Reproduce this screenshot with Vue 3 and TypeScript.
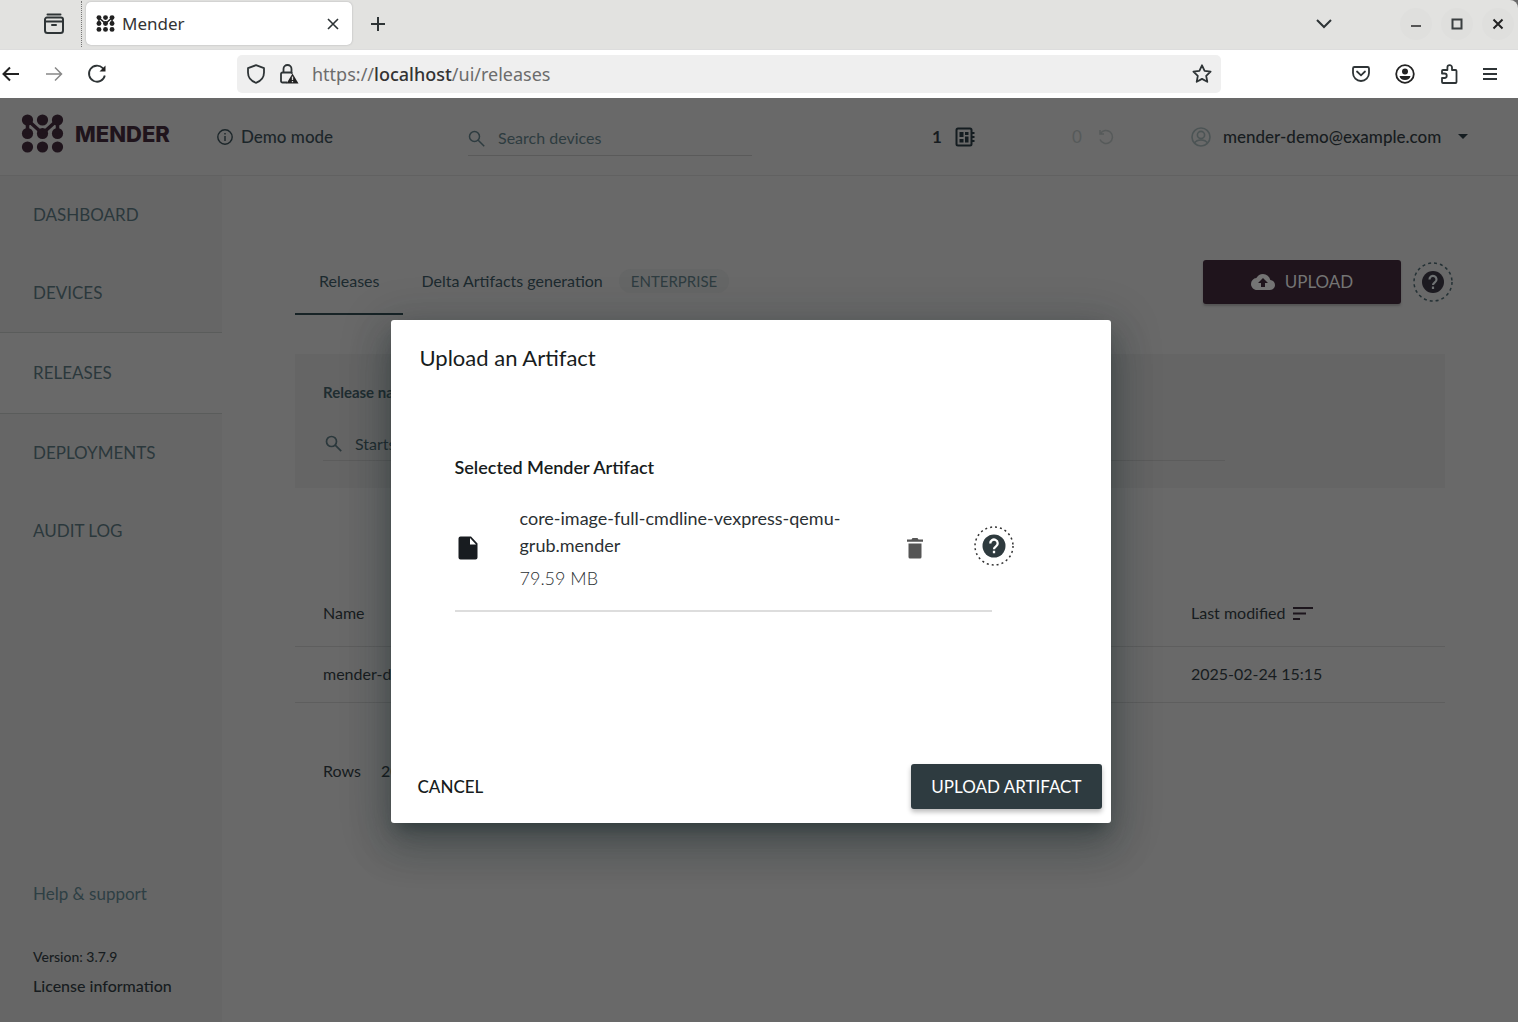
<script setup lang="ts">
import { ref } from 'vue'

interface NavItem {
  label: string
  active?: boolean
}

const navItems: NavItem[] = [
  { label: 'Dashboard' },
  { label: 'Devices' },
  { label: 'Releases', active: true },
  { label: 'Deployments' },
  { label: 'Audit log' },
]

const releases = [{ name: 'mender-demo-artifact', modified: '2025-02-24 15:15' }]

const file = { name: 'core-image-full-cmdline-vexpress-qemu-grub.mender', size: '79.59 MB' }

// Centres of the nine dots in the logo mark
const markDots = [6, 19.5, 33].flatMap((y) => [6.5, 21.5, 36.5].map((x) => ({ x, y })))

const deviceQuery = ref('')
const releaseQuery = ref('')
const rowsPerPage = ref(20)
</script>

<template>
  <div class="window">
    <div class="tabstrip">
      <button class="icon-btn history" aria-label="Recent browsing">
        <svg width="22" height="22" viewBox="0 0 22 22" fill="none" stroke="#2e3436" stroke-width="2">
          <path d="M4.500 1.500h13" stroke-linecap="round" />
          <path d="M2 9.500V6.500a2 2 0 0 1 2-2h14a2 2 0 0 1 2 2v11a2.500 2.500 0 0 1-2.500 2.500h-13A2.500 2.500 0 0 1 2 17.500V8.500h18" />
          <path d="M9 12h4" stroke-linecap="round" />
        </svg>
      </button>
      <div class="tab">
        <svg width="19" height="17" viewBox="0 0 43 39" fill="#222">
          <circle v-for="dot in markDots" :key="`${dot.x}-${dot.y}`" :cx="dot.x" :cy="dot.y" r="5.600" />
          <path d="M6.500 19.500V6l15 13.500L36.500 6v13.500" fill="none" stroke="#222" stroke-width="3.500" />
        </svg>
        <span class="tab-title">Mender</span>
        <button class="icon-btn" aria-label="Close tab">
          <svg width="12" height="12" viewBox="0 0 12 12" stroke="#2e3436" stroke-width="1.600"><path d="M1 1l10 10M11 1L1 11" /></svg>
        </button>
      </div>
      <button class="icon-btn new-tab" aria-label="New tab">
        <svg width="16" height="16" viewBox="0 0 16 16" stroke="#2e3436" stroke-width="2"><path d="M8 1v14M1 8h14" /></svg>
      </button>
      <div class="window-controls">
        <button class="icon-btn list-tabs" aria-label="List all tabs">
          <svg width="16" height="10" viewBox="0 0 16 10" fill="none" stroke="#2e3436" stroke-width="2"><path d="M1 1l7 7 7-7" /></svg>
        </button>
        <button class="icon-btn round" aria-label="Minimize">
          <svg width="12" height="12" viewBox="0 0 12 12" stroke="#555" stroke-width="2"><path d="M1 8h10" /></svg>
        </button>
        <button class="icon-btn round" aria-label="Maximize">
          <svg width="12" height="12" viewBox="0 0 12 12" fill="none" stroke="#3a3f40" stroke-width="2"><path d="M1.500 1.500h9v9h-9z" /></svg>
        </button>
        <button class="icon-btn round" aria-label="Close">
          <svg width="12" height="12" viewBox="0 0 12 12" stroke="#222" stroke-width="2"><path d="M1.500 1.500l9 9M10.500 1.500l-9 9" /></svg>
        </button>
      </div>
    </div>

    <div class="toolbar">
      <button class="icon-btn nav-btn" aria-label="Back">
        <svg width="18" height="16" viewBox="0 0 18 16" fill="none" stroke="#222" stroke-width="2"><path d="M17 8H1.500M8 1.500L1.500 8 8 14.500" /></svg>
      </button>
      <button class="icon-btn nav-btn" aria-label="Forward">
        <svg width="18" height="16" viewBox="0 0 18 16" fill="none" stroke="#888" stroke-width="1.500"><path d="M1 8h15M10 1.500L16.500 8 10 14.500" /></svg>
      </button>
      <button class="icon-btn nav-btn" aria-label="Reload">
        <svg width="20" height="20" viewBox="0 0 20 20" fill="none" stroke="#2e3436" stroke-width="1.800"><path d="M17.800 11.500a8 8 0 1 1-2-7.300l1.500 1.500" /><path d="M18.500 1.500v6h-6z" fill="#222" stroke="none" /></svg>
      </button>
      <div class="urlbar">
        <svg width="20" height="20" viewBox="0 0 20 20" fill="none" stroke="#2e3436" stroke-width="1.800" stroke-linejoin="round"><path d="M10 1.200l8 3v4.300c0 5-3.200 8.600-8 10.300-4.800-1.700-8-5.300-8-10.300V4.200z" /></svg>
        <svg class="lock" width="20" height="20" viewBox="0 0 20 20" fill="none" stroke="#2e3436" stroke-width="1.800"><path d="M4.500 8.500V5a4 4 0 0 1 8 0v3.500M8 18.500H3.500A1.500 1.500 0 0 1 2 17v-7a1.500 1.500 0 0 1 1.500-1.500H12l1.500 1" /><path d="M13.500 9.500l6 10h-12z" fill="#222" stroke="none" /><path d="M13.500 12.500v3.500M13.500 17v1.200" stroke="#ddd" stroke-width="1.300" /></svg>
        <span class="url">https://<b>localhost</b>/ui/releases</span>
        <button class="icon-btn" aria-label="Bookmark this page">
          <svg width="20" height="20" viewBox="0 0 20 20" fill="none" stroke="#2e3436" stroke-width="1.800" stroke-linejoin="round"><path d="M10 1.300l2.600 5.500 6 .8-4.400 4.200 1.100 6-5.300-2.900-5.300 2.900 1.100-6L1.400 7.600l6-.8z" /></svg>
        </button>
      </div>
      <div class="toolbar-actions">
        <button class="icon-btn" aria-label="Pocket">
          <svg width="18" height="18" viewBox="0 0 18 18" fill="none" stroke="#2e3436" stroke-width="1.800"><path d="M2.500 2h13A1.500 1.500 0 0 1 17 3.500V8A8 8 0 0 1 1 8V3.500A1.500 1.500 0 0 1 2.500 2z" /><path d="M5 6.500l4 3.800 4-3.800" stroke-linecap="round" /></svg>
        </button>
        <button class="icon-btn" aria-label="Account">
          <svg width="20" height="20" viewBox="0 0 20 20"><circle cx="10" cy="10" r="8.800" fill="none" stroke="#222" stroke-width="1.800" /><circle cx="10" cy="7.500" r="3" fill="#222" /><path d="M4.500 12h11c-.5 2.500-2.500 4-5.500 4s-5-1.500-5.500-4z" fill="#222" /></svg>
        </button>
        <button class="icon-btn" aria-label="Extensions">
          <svg width="18" height="20" viewBox="0 0 18 20" fill="none" stroke="#2e3436" stroke-width="1.800" stroke-linejoin="round"><path d="M3 19h12.500a1 1 0 0 0 1-1V7a1 1 0 0 0-1-1H12V3.500a2.300 2.300 0 0 0-4.600 0V6H3a1 1 0 0 0-1 1v2.500h2.500a2.200 2.200 0 0 1 0 4.500H2v4a1 1 0 0 0 1 1z" /></svg>
        </button>
        <button class="icon-btn" aria-label="Menu">
          <svg width="14" height="14" viewBox="0 0 14 14" stroke="#2e3436" stroke-width="2"><path d="M0 2h14M0 7h14M0 12h14" /></svg>
        </button>
      </div>
    </div>

    <div class="page">
      <header class="header">
        <a class="brand" href="#">
          <svg width="43" height="39" viewBox="0 0 43 39" fill="#1f141c">
            <circle v-for="dot in markDots" :key="`${dot.x}-${dot.y}`" :cx="dot.x" :cy="dot.y" r="5.600" />
            <path d="M6.500 19.500V6l15 13.500L36.500 6v13.500" fill="none" stroke="#1f141c" stroke-width="3.500" />
          </svg>
          <span class="wordmark">MENDER</span>
        </a>
        <div class="demo">
          <svg width="16" height="16" viewBox="0 0 16 16" fill="none" stroke="#1c262a" stroke-width="1.400"><circle cx="8" cy="8" r="7.200" /><path d="M8 7v5M8 4v1.600" /></svg>
          <span>Demo mode</span>
        </div>
        <label class="search">
          <svg width="17" height="17" viewBox="0 0 17 17" fill="none" stroke="#2e3c40" stroke-width="1.500"><circle cx="6.500" cy="6.500" r="5" /><path d="M10.200 10.200l6 6" /></svg>
          <input v-model="deviceQuery" type="text" placeholder="Search devices" aria-label="Search devices" />
        </label>
        <div class="counter">
          <b>1</b>
          <svg width="20" height="20" viewBox="0 0 20 20" fill="none" stroke="#141c20" stroke-width="2"><rect x="1.500" y="1.500" width="15" height="17" rx="1.500" /><path d="M16.500 6h3M16.500 10h3M16.500 14h3" /><path d="M4.500 5h4v5h-4zM10 5h3.500v3H10zM4.500 12h4v3.500h-4zM10 9.500h3.500v6H10z" fill="#141c20" stroke="none" /></svg>
        </div>
        <div class="counter muted">
          <span>0</span>
          <svg width="16" height="16" viewBox="0 0 16 16" fill="none" stroke="#565a5a" stroke-width="1.500"><path d="M2.500 4.500a6.500 6.500 0 1 1-.5 6M2 1v4h4" /></svg>
        </div>
        <button class="account">
          <svg width="20" height="20" viewBox="0 0 20 20" fill="none" stroke="#4c5455" stroke-width="1.600"><circle cx="10" cy="10" r="9" /><circle cx="10" cy="8" r="3.600" /><path d="M3.500 16c2.500-4 10.500-4 13 0" /></svg>
          <span>mender-demo@example.com</span>
          <svg class="caret" width="10" height="5" viewBox="0 0 10 5" fill="#141c20"><path d="M0 0h10L5 5z" /></svg>
        </button>
      </header>

      <div class="body">
        <nav class="sidebar">
          <a v-for="item in navItems" :key="item.label" href="#" class="nav-link" :class="{ active: item.active }">{{ item.label }}</a>
          <div class="sidebar-foot">
            <a href="#" class="help-link">Help &amp; support</a>
            <span class="version">Version: 3.7.9</span>
            <a href="#" class="license">License information</a>
          </div>
        </nav>

        <main class="main">
          <div class="tabs-row">
            <div class="tabs">
              <button class="tab-btn selected">Releases</button>
              <button class="tab-btn">Delta Artifacts generation <span class="chip">ENTERPRISE</span></button>
            </div>
            <button class="upload">
              <svg width="24" height="16" viewBox="0 0 24 16" fill="#747474"><path d="M19.350 6.040A7.490 7.490 0 0 0 12 0C9.110 0 6.600 1.640 5.350 4.040A5.994 5.994 0 0 0 0 10c0 3.310 2.690 6 6 6h13c2.760 0 5-2.240 5-5 0-2.640-2.050-4.780-4.650-4.960zM14 9v4h-4V9H7l5-5 5 5z" /></svg>
              <span>UPLOAD</span>
            </button>
            <button class="help-ring" aria-label="Help">
              <svg width="40" height="40" viewBox="0 0 40 40"><circle cx="20" cy="20" r="19" fill="none" stroke="#243135" stroke-width="1.500" stroke-dasharray="3 3" /><circle cx="20" cy="20" r="11" fill="#1c1a20" /><path d="M16.500 17.500a3.500 3.500 0 1 1 5.500 2.700c-1.200.9-2 1.400-2 2.800M20 24.500v2.500" fill="none" stroke="#6f7273" stroke-width="2.200" /></svg>
            </button>
          </div>

          <section class="filter">
            <label for="release-name">Release name</label>
            <div class="filter-input">
              <svg width="17" height="17" viewBox="0 0 17 17" fill="none" stroke="#2b383c" stroke-width="1.700"><circle cx="6.500" cy="6.500" r="5" /><path d="M10.200 10.200l6 6" /></svg>
              <input id="release-name" v-model="releaseQuery" type="text" placeholder="Starts with" />
            </div>
          </section>

          <table class="releases">
            <thead>
              <tr>
                <th>Name</th>
                <th>
                  <span class="sort">Last modified
                    <svg width="22" height="14" viewBox="0 0 22 14" stroke="#1c151c" stroke-width="2"><path d="M1 2h20M1 7.500h13M1 13h7" /></svg>
                  </span>
                </th>
              </tr>
            </thead>
            <tbody>
              <tr v-for="release in releases" :key="release.name">
                <td>{{ release.name }}</td>
                <td>{{ release.modified }}</td>
              </tr>
            </tbody>
          </table>

          <div class="pager">
            <label for="rows">Rows</label>
            <select id="rows" v-model="rowsPerPage">
              <option :value="10">10</option>
              <option :value="20">20</option>
              <option :value="50">50</option>
            </select>
          </div>
        </main>
      </div>

      <div class="overlay">
        <div class="dialog" role="dialog" aria-labelledby="dialog-title">
          <h2 id="dialog-title">Upload an Artifact</h2>
          <div class="dialog-body">
            <h3>Selected Mender Artifact</h3>
            <div class="file">
              <svg class="file-icon" width="20" height="24" viewBox="0 0 20 24"><path d="M2.500 0.500H13L19.500 7.500v14a2 2 0 0 1-2 2h-15a2 2 0 0 1-2-2v-19a2 2 0 0 1 2-2z" fill="#181c20" /><path d="M12 2v6.500h6z" fill="#fff" /></svg>
              <div class="file-text">
                <div class="file-name">{{ file.name }}</div>
                <div class="file-size">{{ file.size }}</div>
              </div>
              <button class="icon-btn" aria-label="Remove file">
                <svg width="16" height="21" viewBox="0 0 16 21" fill="#555"><path d="M1.500 5.500h13V19a1.500 1.500 0 0 1-1.500 1.500H3A1.500 1.500 0 0 1 1.500 19zM0 1.500h4.500L5.500 0h5l1 1.500H16v2.300H0z" /></svg>
              </button>
              <button class="help-ring" aria-label="Help">
                <svg width="40" height="40" viewBox="0 0 40 40"><circle cx="20" cy="20" r="19" fill="none" stroke="#333" stroke-width="1.500" stroke-dasharray="2 3" /><circle cx="20" cy="20" r="11.500" fill="#2e3a3e" /><path d="M16.300 17.500a3.700 3.700 0 1 1 5.800 2.800c-1.300.9-2.100 1.400-2.100 2.900M20 24.700v2.600" fill="none" stroke="#fff" stroke-width="2.300" /></svg>
              </button>
            </div>
            <hr />
          </div>
          <div class="dialog-actions">
            <button class="cancel">CANCEL</button>
            <button class="submit">UPLOAD ARTIFACT</button>
          </div>
        </div>
      </div>
    </div>
  </div>
</template>

<style>
body {
  margin: 0;
  background: #696969;
}
</style>

<style scoped>
* {
  box-sizing: border-box;
}
button,
input,
select {
  font: inherit;
  color: inherit;
  background: none;
  border: 0;
  padding: 0;
  margin: 0;
}
a {
  color: inherit;
  text-decoration: none;
}
svg {
  display: block;
  flex: none;
}
.window {
  display: flex;
  flex-direction: column;
  min-height: 100vh;
}

/* Browser chrome */
.icon-btn {
  display: grid;
  place-items: center;
}
.tabstrip {
  display: flex;
  align-items: center;
  height: 50px;
  padding-bottom: 2px;
  background: #e2e2e0;
  border-top-right-radius: 8px;
  border-bottom: 1px solid #ddd;
  font-family: "Noto Sans", sans-serif;
}
.history {
  width: 82px;
  height: 46px;
  padding-left: 26px;
  border-right: 1px dotted #777;
}
.tab {
  display: flex;
  align-items: center;
  width: 266px;
  height: 43px;
  margin-left: 4px;
  padding: 0 13px 0 10px;
  background: #fff;
  border-radius: 5px;
  box-shadow: 0 0 2px #aaa;
}
.tab-title {
  flex: 1;
  padding-left: 7px;
  font-size: 17px;
  color: #333;
}
.new-tab {
  margin-left: 18px;
}
.window-controls {
  display: flex;
  align-items: center;
  gap: 9px;
  margin-left: auto;
  padding-right: 4px;
}
.list-tabs {
  margin-right: 59px;
}
.round {
  width: 32px;
  height: 32px;
  border-radius: 50%;
  background: #dfdfdd;
}
.toolbar {
  display: flex;
  align-items: center;
  height: 48px;
  background: #fff;
}
.nav-btn {
  width: 43px;
}
.nav-btn:first-child {
  width: 32px;
  padding-right: 10px;
}
.urlbar {
  display: flex;
  align-items: center;
  flex: 1;
  height: 38px;
  margin-left: 119px;
  padding: 0 9px;
  background: #efefef;
  border-radius: 5px;
  font: 18px "Noto Sans", sans-serif;
  color: #6c6c6c;
}
.urlbar b {
  font-weight: 500;
  color: #333;
}
.lock {
  margin-left: 13px;
}
.url {
  flex: 1;
  padding-left: 13px;
}
.toolbar-actions {
  display: flex;
  align-items: center;
  gap: 25px;
  margin-left: 131px;
  padding-right: 21px;
}

/* Application */
.page {
  display: flex;
  flex-direction: column;
  flex: 1;
  position: relative;
  background: #696969;
  color: #171c20;
  font: 16px/20px Lato, sans-serif;
}
.header {
  display: grid;
  grid-template-columns: 217fr 251fr 464fr 140fr 119fr 327fr;
  align-items: center;
  height: 78px;
  border-bottom: 1px solid #616161;
}
.brand {
  display: flex;
  align-items: center;
  gap: 11px;
  padding: 0 0 6px 21px;
  color: #1f141c;
}
.wordmark {
  font: 800 22px/28px Inter, sans-serif;
}
.demo {
  display: flex;
  align-items: center;
  gap: 8px;
  font-size: 17px;
  font-weight: 500;
  color: #1c262a;
}
.search {
  display: flex;
  align-items: center;
  gap: 13px;
  width: 284px;
  height: 34px;
  margin-top: 4px;
  border-bottom: 1px solid #5a5a5a;
  color: #2e3c40;
}
.search input,
.filter-input input {
  flex: 1;
  min-width: 0;
  outline: 0;
}
input::placeholder {
  color: inherit;
  opacity: 1;
}
.counter {
  display: flex;
  align-items: center;
  gap: 13px;
  font-size: 17px;
}
.muted {
  gap: 16px;
  color: #565a5a;
}
.account {
  display: flex;
  align-items: center;
  gap: 12px;
  font-size: 17px;
  font-weight: 500;
}
.caret {
  margin-left: 5px;
}

.body {
  display: flex;
  flex: 1;
}
.sidebar {
  display: flex;
  flex-direction: column;
  flex: none;
  width: 222px;
  background: #666;
}
.nav-link {
  display: flex;
  align-items: center;
  height: 78px;
  padding-left: 33px;
  font-size: 17px;
  text-transform: uppercase;
  color: #2b383c;
}
.nav-link.active {
  height: 82px;
  background: #696969;
  border: solid #5a5c5b;
  border-width: 1px 0;
}
.sidebar-foot {
  display: flex;
  flex-direction: column;
  margin-top: auto;
  padding: 0 0 26px 33px;
}
.help-link {
  margin-bottom: 43px;
  font-size: 17px;
  color: #2e3f44;
}
.version {
  margin-bottom: 9px;
  font-size: 14px;
  font-weight: 500;
}
.license {
  font-weight: 500;
}

.main {
  flex: 1;
  padding: 73px 73px 0;
}
.tabs-row {
  display: flex;
  align-items: center;
  margin-right: -8px;
}
.tabs {
  display: flex;
  flex: 1;
}
.tab-btn {
  display: flex;
  align-items: center;
  height: 66px;
  padding: 0 24px;
  border-bottom: 2px solid transparent;
  white-space: nowrap;
  color: #1c2a2f;
}
.tab-btn + .tab-btn {
  padding: 0 18px;
}
.tab-btn.selected {
  border-bottom-color: #172326;
}
.chip {
  margin-left: 16px;
  padding: 2px 12px;
  border-radius: 12px;
  background: #656666;
  font-size: 15px;
  color: #2e3c40;
}
.upload {
  display: flex;
  align-items: center;
  justify-content: center;
  gap: 10px;
  width: 198px;
  height: 44px;
  margin-right: 12px;
  background: #1f141c;
  border-radius: 3px;
  box-shadow: 0 2px 2px #555;
  font-size: 17px;
  color: #747474;
}
.filter {
  margin-top: 39px;
  height: 134px;
  padding: 28px;
  background: #656565;
  color: #1f2d31;
}
.filter label {
  display: block;
  font-size: 15px;
  font-weight: 700;
}
.filter-input {
  display: flex;
  align-items: center;
  gap: 13px;
  height: 34px;
  width: 902px;
  margin-top: 25px;
  padding-left: 2px;
  border-bottom: 1px solid #5c5c5c;
}
.releases {
  width: 100%;
  margin-top: 92px;
  border-collapse: collapse;
  table-layout: fixed;
  text-align: left;
}
.releases th,
.releases td {
  height: 56px;
  padding: 0 0 0 28px;
  border-bottom: 1px solid #5e5e5e;
  font-weight: 400;
}
.releases th {
  height: 66px;
}
.releases th:last-child {
  width: 282px;
}
.sort {
  display: flex;
  align-items: center;
  gap: 6px;
}
.pager {
  display: flex;
  align-items: center;
  gap: 20px;
  margin-top: 58px;
  padding-left: 28px;
}
.pager select {
  appearance: none;
  font-weight: 500;
}

/* Upload dialog */
.overlay {
  position: absolute;
  inset: 0;
  display: grid;
  place-items: center;
  padding: 23px 17px 0 0;
}
.dialog {
  display: flex;
  flex-direction: column;
  width: 720px;
  min-height: 503px;
  background: #fff;
  border-radius: 3px;
  box-shadow: 0 11px 15px -7px rgba(20, 35, 38, 0.5), 0 24px 38px 3px rgba(20, 35, 38, 0.22), 0 9px 46px 8px rgba(20, 35, 38, 0.2);
}
.dialog h2 {
  margin: 0;
  padding: 24px 29px;
  font-size: 22px;
  line-height: 28px;
  font-weight: 400;
}
.dialog-body {
  flex: 1;
  padding: 59px 96px 0 64px;
}
.dialog h3 {
  margin: 0 0 26px;
  font-size: 18px;
  line-height: 24px;
  font-weight: 600;
}
.file {
  display: flex;
  align-items: center;
  font-size: 18px;
  color: #2b3033;
}
.file-icon {
  margin: 0 42px 0 3px;
}
.file-text {
  flex: 1;
}
.file-name {
  width: 336px;
  line-height: 27px;
}
.file-size {
  margin-top: 6px;
  line-height: 26px;
  font-weight: 300;
}
.file .help-ring {
  margin: 0 1px 4px 51px;
}
.dialog hr {
  margin: 19px 23px 0 0;
  border: 0;
  border-top: 2px solid #ddd;
}
.dialog-actions {
  display: flex;
  align-items: center;
  justify-content: space-between;
  padding: 0 9px 14px 27px;
  font-size: 17px;
}
.cancel {
  font-weight: 500;
}
.submit {
  height: 45px;
  padding: 0 20px;
  background: #2e3b40;
  border-radius: 3px;
  box-shadow: 0 3px 5px #bbb;
  color: #fff;
}
</style>
